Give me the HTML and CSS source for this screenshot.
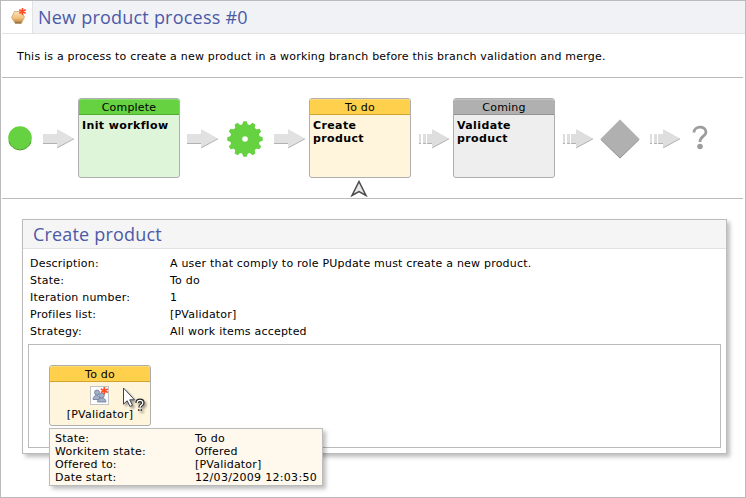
FILE: index.html
```html
<!DOCTYPE html>
<html lang="en">
<head>
<meta charset="utf-8">
<title>New product process #0</title>
<link rel="stylesheet" href="styles.css">
</head>
<body>
<svg class="defs" width="0" height="0">
  <defs>
    <symbol id="arrow" viewBox="0 0 32 22">
      <path d="M0 6H14V1L31 10.5L14 20V15.5H0Z" fill="#e1e1e1"/>
      <path d="M0 15.5H14M14.3 19.8L31 10.8" fill="none" stroke="#a9a9a9" stroke-width=".9"/>
    </symbol>
    <symbol id="arrow-dashed" viewBox="0 0 32 22">
      <path d="M0 6H2V15.5H0ZM4 6H7V15.5H4ZM8 6H13V1L30 10.5L13 20V15.5H8Z" fill="#dedede"/>
      <path d="M0 15.5H2M4 15.5H7M8 15.5H13M13.3 19.8L30 10.8" fill="none" stroke="#a9a9a9" stroke-width=".9"/>
    </symbol>
  </defs>
</svg>
<div class="window">
  <header class="titlebar">
    <div class="titlebar-icon">
      <svg width="18" height="18" viewBox="0 0 18 18">
        <defs><linearGradient id="hex" x1="0" y1="0" x2="0" y2="1"><stop offset="0" stop-color="#fbe3b8"/><stop offset=".6" stop-color="#f0bd78"/><stop offset="1" stop-color="#b07c3a"/></linearGradient></defs>
        <path d="M4.500 4.500H11L14.500 10L11.500 16H5L1.500 10.500Z" fill="url(#hex)" stroke="#c8a470" stroke-width=".8" stroke-linejoin="round"/>
        <path d="M5 16H11.500" stroke="#7d5b2c"/>
        <path d="M12.500 1V8M9.300 2.700L15.700 6.300M15.700 2.700L9.300 6.300" stroke="#ff4a26" stroke-width="1.600"/>
      </svg>
    </div>
    <h1 class="title">New product process #0</h1>
  </header>
  <p class="intro">This is a process to create a new product in a working branch before this branch validation and merge.</p>
  <section class="flow">
    <svg class="start" width="25" height="25" viewBox="0 0 25 25">
      <circle cx="12" cy="12" r="11.800" fill="#66d141"/>
      <path d="M1 15.500A11.400 11.400 0 0 0 23 15.500" fill="none" stroke="#459b29"/>
    </svg>
    <svg class="arrow a1"><use href="#arrow"/></svg>
    <article class="card done"><h2>Complete</h2><p>Init workflow</p></article>
    <svg class="arrow a2"><use href="#arrow"/></svg>
    <svg class="gear" width="36" height="36" viewBox="-18 -18 36 36">
      <defs><path id="teeth" d="M-3 -14L-1.700 -17.700H1.700L3 -14V14L1.700 17.700H-1.700L-3 14Z"/></defs>
      <g fill="#66d141">
        <circle r="14.800"/>
        <use href="#teeth"/>
        <use href="#teeth" transform="rotate(30)"/>
        <use href="#teeth" transform="rotate(60)"/>
        <use href="#teeth" transform="rotate(90)"/>
        <use href="#teeth" transform="rotate(120)"/>
        <use href="#teeth" transform="rotate(150)"/>
      </g>
      <circle r="2.800" fill="#fff"/>
    </svg>
    <svg class="arrow a3"><use href="#arrow"/></svg>
    <article class="card todo"><h2>To do</h2><p>Create<br>product</p>
      <svg class="pointer" width="18" height="17" viewBox="0 0 18 17"><path d="M9 1.500L16 15.500L9 11.500L2 15.500Z" fill="#e8e8e8" stroke="#4a4a4a" stroke-width="1.500"/></svg>
    </article>
    <svg class="arrow a4"><use href="#arrow-dashed"/></svg>
    <article class="card coming"><h2>Coming</h2><p>Validate<br>product</p></article>
    <svg class="arrow a5"><use href="#arrow-dashed"/></svg>
    <svg class="diamond" width="40" height="40" viewBox="0 0 40 40"><path d="M20 .5L39.500 20L20 39.500L.5 20Z" fill="#b0b0b0"/><path d="M.8 20.500L20 39L39.200 20.500" fill="none" stroke="#929292"/></svg>
    <svg class="arrow a6"><use href="#arrow-dashed"/></svg>
    <svg class="end" width="16" height="26" viewBox="0 0 16 26">
      <path d="M2 7.500C2 .5 14 .5 14 7C14 11.500 8 11 8 17" fill="none" stroke="#9c9c9c" stroke-width="2.800"/>
      <circle cx="8" cy="21.500" r="2.800" fill="#9c9c9c"/>
    </svg>
  </section>
  <section class="panel">
    <h2 class="panel-title">Create product</h2>
    <dl class="details">
      <dt>Description:</dt><dd>A user that comply to role PUpdate must create a new product.</dd>
      <dt>State:</dt><dd>To do</dd>
      <dt>Iteration number:</dt><dd>1</dd>
      <dt>Profiles list:</dt><dd>[PValidator]</dd>
      <dt>Strategy:</dt><dd>All work items accepted</dd>
    </dl>
    <div class="items">
      <article class="card todo workitem">
        <h2>To do</h2>
        <svg class="users" width="19" height="19" viewBox="0 0 19 19">
          <rect x=".5" y=".5" width="18" height="18" fill="#fff" stroke="#c4c4c4"/>
          <g fill="#a3afc9" stroke="#6b7a99" stroke-width=".8">
            <path d="M3 13.500C3 8 10 8 10 13.500Z"/><circle cx="7" cy="6.500" r="2.500"/>
            <path d="M7.500 16C7.500 10.500 16 10.500 16 16Z"/><circle cx="11.800" cy="9.500" r="2.500"/>
          </g>
          <path d="M14.300 1V8.600M10.800 3L17.800 6.600M17.800 3L10.800 6.600" stroke="#ff4a26" stroke-width="1.700"/>
        </svg>
        <div class="who">[PValidator]</div>
        <svg class="cursor" width="24" height="26" viewBox="0 0 24 26">
          <path d="M1.500 1V17.200L5.200 13.800L8 19.500L10.500 18.300L7.800 12.800H12.500Z" fill="#fff" stroke="#39424e"/>
          <path d="M15.200 16C15.200 12.500 20.800 12.500 20.800 16C20.800 18 18 17.800 18 20.500M18 22V24" fill="none" stroke="#222" stroke-width="3.600"/>
          <path d="M15.200 16C15.200 12.500 20.800 12.500 20.800 16C20.800 18 18 17.800 18 20.500M18 22V23.700" fill="none" stroke="#fff" stroke-width="1.300"/>
        </svg>
        <dl class="tooltip">
          <dt>State:</dt><dd>To do</dd>
          <dt>Workitem state:</dt><dd>Offered</dd>
          <dt>Offered to:</dt><dd>[PValidator]</dd>
          <dt>Date start:</dt><dd class="date">12/03/2009 12:03:50</dd>
        </dl>
      </article>
    </div>
  </section>
</div>
</body>
</html>
```
FILE: styles.css
```css
* { box-sizing: border-box; margin: 0; padding: 0; }
body {
  font: 11px/13px Verdana, "DejaVu Sans", sans-serif;
  letter-spacing: .21px;
  color: #000;
  background: #fff;
}
svg { display: block; flex: none; }
.defs { position: absolute; }
.window { width: 746px; height: 498px; border: 1px solid #bbb; }

.titlebar { display: flex; height: 33px; margin-left: 1px; border-bottom: 1px solid #e2e2e2; background: #f1f2f6; }
.titlebar-icon { width: 31px; background: #fff; border-right: 1px solid #e2e2e2; padding: 6px 0 0 8px; }
.title { font: 18px/32px "Open Sans", sans-serif; color: #4b5aa6; margin-left: 5px; letter-spacing: .22px; }
.intro { height: 43px; padding: 16px 0 0 16px; }

.flow {
  display: flex;
  height: 122px;
  margin: 0 2px 0 1px;
  padding: 20px 0 0 6px;
  border-top: 1px solid #bbb;
  border-bottom: 1px solid #bbb;
}
.start { margin-top: 28px; }
.arrow { width: 32px; height: 22px; margin-top: 30px; }
.a1 { margin-left: 10px; margin-right: 3px; }
.a2 { margin-left: 7px; margin-right: 8px; }
.a3 { margin-left: 11px; margin-right: 3px; }
.a4 { margin-left: 8px; margin-right: 2px; }
.a5 { margin-left: 8px; margin-right: 5px; }
.a6 { margin-left: 10px; margin-right: 10px; }
.gear { margin-top: 23px; }
.diamond { margin-top: 21px; }
.end { margin-top: 27px; }

.card {
  position: relative;
  flex: none;
  width: 102px;
  height: 80px;
  border: 1px solid #aeaeae;
  border-radius: 3px;
}
.card h2 {
  height: 16px;
  font: 11px/15px Verdana, "DejaVu Sans", sans-serif;
  text-align: center;
  border-top: 1px solid;
  border-bottom: 1px solid;
  border-radius: 2px 2px 0 0;
}
.card p { padding: 4px 3px; font-weight: bold; letter-spacing: .38px; white-space: nowrap; }
.done { background: #dff5d9; }
.done h2 { background: #66d141; border-color: #84dc66 transparent #4fac31; }
.todo { background: #fff5dc; }
.todo h2 { background: #ffd04b; border-color: #ffda73 transparent #d3a42d; }
.coming { background: #eee; }
.coming h2 { background: #b0b0b0; border-color: #c0c0c0 transparent #929292; }
.pointer { position: absolute; left: 40px; top: 81px; }

.panel {
  width: 705px;
  height: 235px;
  margin: 20px 0 0 21px;
  border: 1px solid #bbb;
  background: #fff;
  box-shadow: 3px 3px 4px rgba(0, 0, 0, .25);
}
.panel-title { height: 29px; padding-left: 10px; font: 18px/29px "Open Sans", sans-serif; letter-spacing: .18px; color: #4b5aa6; background: #f5f5f5; border-bottom: 1px solid #e2e2e2; }
.details { display: grid; grid-template-columns: 140px 1fr; grid-auto-rows: 17px; line-height: 17px; padding: 6px 0 0 7px; }
.items { width: 693px; height: 104px; margin: 4px 0 0 5px; padding: 20px; border: 1px solid #bbb; }
.workitem { height: 61px; }
.users { margin: 4px 0 0 40px; }
.who { text-align: center; line-height: 13px; margin-top: 3px; }
.cursor { position: absolute; left: 72px; top: 21px; filter: drop-shadow(2px 2px 1px rgba(0, 0, 0, .35)); }
.tooltip {
  position: absolute;
  left: -1px;
  top: 62px;
  width: 274px;
  height: 58px;
  display: grid;
  grid-template-columns: 140px 1fr;
  grid-auto-rows: 13px;
  padding: 3px 0 0 5px;
  background: #fff8ec;
  border: 1px solid #bbb;
  box-shadow: 3px 3px 4px rgba(0, 0, 0, .25);
}
.date { letter-spacing: .3px; }
```
